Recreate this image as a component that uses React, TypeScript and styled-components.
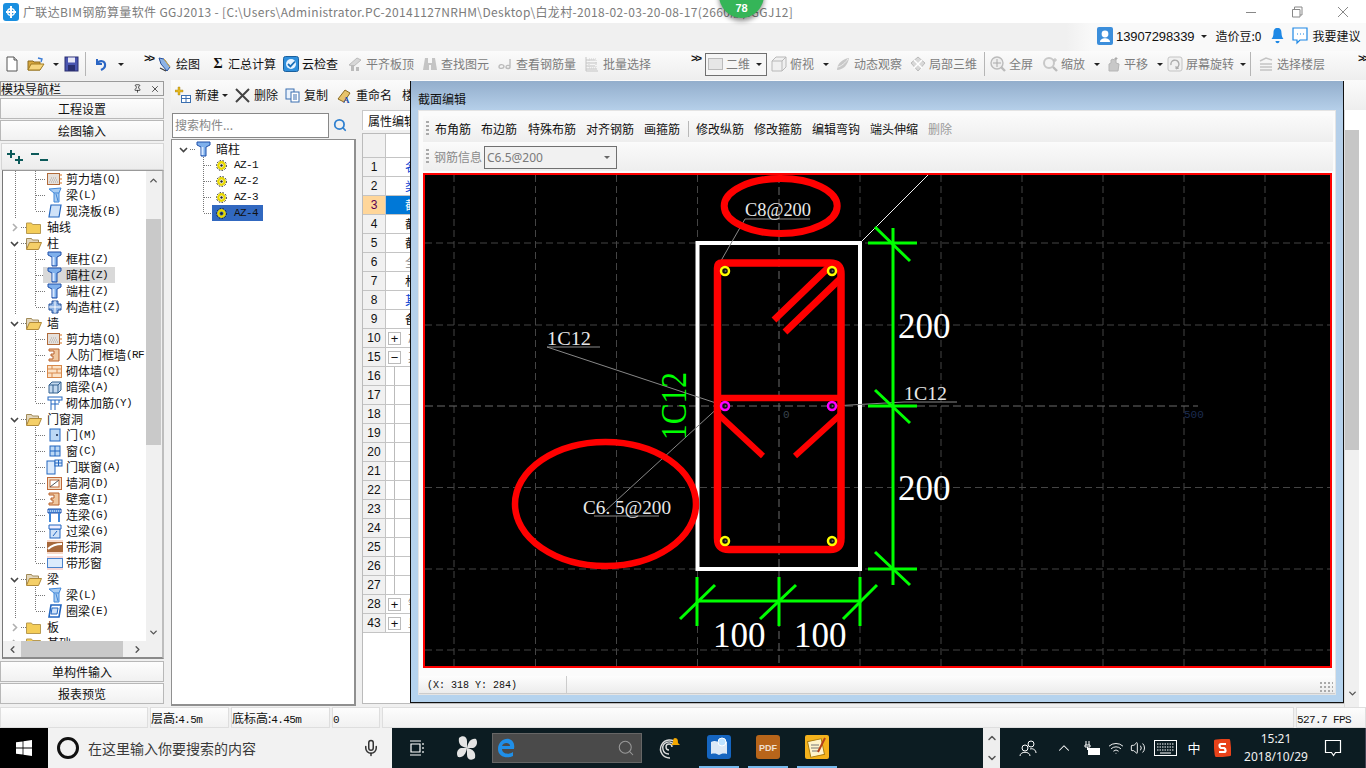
import React from "react";
import styled, { createGlobalStyle } from "styled-components";
import { Mic, Search, Volume2, Wifi, ChevronUp, ChevronDown, ChevronLeft, ChevronRight, X, Pin } from "lucide-react";

const CJK = '"Noto Sans CJK SC", "Liberation Sans", sans-serif';
const MONO = '"Liberation Mono", "Noto Sans CJK SC", monospace';

const GlobalStyle = createGlobalStyle`
  html, body { margin: 0; padding: 0; width: 1366px; height: 768px; overflow: hidden; background: #f0f0f0; }
  * { box-sizing: border-box; }
`;

const Page = styled.div`
  position: relative; width: 1366px; height: 768px; overflow: hidden; display: flex; flex-direction: column;
  font: 12px/16px ${CJK}; color: #111; background: #f0f0f0;
`;

/* ---------- title ---------- */
const TitleBar = styled.div`
  height: 23px; flex: none; background: #fff; display: flex; align-items: center; padding-left: 3px;
  color: #7c7c7c; font-size: 12px; white-space: nowrap;
`;
const TitleText = styled.span`margin-left: 4px; letter-spacing: 0.35px;`;
const WinButtons = styled.div`margin-left: auto; display: flex; height: 23px; align-items: center;`;
const WinBtn = styled.div`width: 46px; display: flex; justify-content: center; align-items: center;`;
const Badge = styled.div`
  position: absolute; left: 719px; top: -28px; width: 45px; height: 46px; border-radius: 50%;
  background: #35b558; box-shadow: 0 3px 5px rgba(0,0,0,.45); color: #fff; font: bold 11px/14px "Liberation Sans", sans-serif;
  display: flex; align-items: flex-end; justify-content: center; padding-bottom: 3px;
`;

const UserBar = styled.div`height: 28px; flex: none; display: flex; align-items: center; justify-content: flex-end; background: #f0f0f0;`;
const UserPlate = styled.div`
  width: 274px; height: 28px; display: flex; align-items: center; background: #f9f9f9; padding: 0 0 2px 5px;
  font-size: 12px; color: #111; white-space: nowrap;
`;
const UserGhost = styled.div`width: 26px; height: 28px; background: linear-gradient(90deg,#f0f0f0,#f9f9f9);`;
const UserNum = styled.span`margin-left: 3px; font: 13px "Liberation Sans", sans-serif; letter-spacing: -0.1px;`;
const UserGap = styled.span<{ $w: number }>`width: ${p => p.$w}px; flex: none;`;

/* ---------- toolbar ---------- */
const ToolBar = styled.div`
  height: 29px; flex: none; display: flex; align-items: center; white-space: nowrap; overflow: hidden;
  background: linear-gradient(#fbfbfb, #eeeeee); padding: 0 0 3px 6px;
`;
const Tool = styled.div<{ $w: number; $off?: boolean }>`
  width: ${p => p.$w}px; flex: none; display: flex; align-items: center; gap: 3px; height: 22px;
  color: ${p => (p.$off ? "#7d7d7d" : "#111")};
`;
const Caret = styled.i<{ $ml?: number; $c?: string }>`
  display: inline-block; width: 0; height: 0; border: 3px solid transparent; border-top: 3px solid ${p => p.$c ?? "#222"}; border-bottom: 0;
  margin-left: ${p => p.$ml ?? 6}px;
`;
const Sep = styled.div<{ $w: number }>`
  width: ${p => p.$w}px; flex: none; height: 24px; position: relative;
  &::before { content: ""; display: block; width: 1px; height: 24px; background: #b5b5b5; }
`;
const More = styled.span<{ $w: number }>`
  width: ${p => p.$w}px; flex: none; align-self: flex-start; font: bold 11px/16px "Liberation Mono", monospace; letter-spacing: -2px; color: #111;
`;
const ViewCombo = styled.div`
  width: 62px; height: 23px; flex: none; margin-right: 4px; border: 1px solid #707070; background: #f6f6f6; display: flex; align-items: center;
  padding-left: 2px; color: #7d7d7d; gap: 3px;
`;
const ViewSwatch = styled.span`width: 15px; height: 12px; border: 1px solid #bbb; background: #e6e6e6;`;
const Sigma = styled.span`width: 14px; font: bold 14px "Liberation Serif", serif; text-align: center;`;

/* ---------- workspace ---------- */
const Workspace = styled.div`flex: 1; min-height: 0; display: flex;`;

const Nav = styled.div`width: 165px; flex: none; display: flex; flex-direction: column; padding-top: 1px; background: #f0f0f0;`;
const NavHead = styled.div`
  height: 15px; flex: none; border: 1px solid #9a9a9a; background: #f0f0f0; display: flex; align-items: center; font-size: 12px; line-height: 13px; margin-bottom: 2px; margin-right: 1px;
`;
const NavHeadIcons = styled.span`margin-left: auto; display: flex; gap: 8px; padding-right: 3px; align-items: center;`;
const NavBtn = styled.div`
  height: 21px; flex: none; margin: 0 1px 1px 0; border: 1px solid #b8b8b8; background: linear-gradient(#fdfdfd,#f1f1f1);
  text-align: center; line-height: 19px; color: #111;
`;
const TreeTools = styled.div`
  height: 27px; flex: none; margin: 1px 1px 0 1px; background: linear-gradient(#f9f9f9,#ececec); border: 1px solid #d6d6d6; display: flex; align-items: center; gap: 7px; padding-left: 5px;
`;
const TreeFrame = styled.div`
  height: 489px; flex: none; margin-right: 1px; margin-left: 2px; border-left: 1px solid #777; border-bottom: 2px solid #8a8a8a; border-right: 2px solid #bdbdbd; border-top: 1px solid #999; background: #f0f0f0;
  display: grid; grid-template-columns: 143px 15px; grid-template-rows: 470px 16px; 
`;
const TreeList = styled.div`background: #fff; overflow: hidden;`;

const dots = (x: number, h: string) =>
  `repeating-linear-gradient(#777 0 1px, transparent 1px 2px) ${x}px 0 / 1px ${h} no-repeat`;
const hdots = (x: number, w: number) =>
  `repeating-linear-gradient(90deg,#777 0 1px, transparent 1px 2px) ${x}px 8px / ${w}px 1px no-repeat`;

const FolderRow = styled.div`
  height: 16px; display: flex; align-items: center; padding-left: 6px; white-space: nowrap; background: ${hdots(18, 6)};
`;
const ChildRow = styled.div<{ $last?: boolean }>`
  height: 16px; display: flex; align-items: center; padding-left: 40px; white-space: nowrap;
  background: ${p => `${dots(12, "100%")}, ${dots(32, p.$last ? "8px" : "100%")}, ${hdots(33, 9)}`};
`;
const ChevronSlot = styled.span`width: 11px; flex: none; display: flex; justify-content: center;`;
const FolderSlot = styled.span`width: 16px; margin-left: 6px; margin-right: 5px; flex: none; display: flex;`;
const ChildLabel = styled.span<{ $hot?: boolean }>`
  display: flex; align-items: center; height: 16px; padding-left: 3px; padding-right: 7px; background: ${p => (p.$hot ? "#d9d9d9" : "transparent")};
`;
const ChildIcon = styled.span`width: 17px; margin-right: 3px; display: flex; justify-content: center;`;
const Code = styled.span`font: 11px/16px ${MONO}; letter-spacing: -0.6px;`;

const VScroll = styled.div`display: flex; flex-direction: column; align-items: center; background: #f0f0f0;`;
const ScrollEnd = styled.div`height: 18px; flex: none; display: flex; align-items: center; justify-content: center; width: 100%;`;
const VThumbGap = styled.div<{ $h: number }>`height: ${p => p.$h}px; flex: none;`;
const VThumb = styled.div<{ $h: number }>`height: ${p => p.$h}px; width: 100%; flex: none; background: #c9c9c9;`;
const HScroll = styled.div`display: flex; align-items: center; background: #f0f0f0;`;
const HEnd = styled.div<{ $ml?: number }>`width: 18px; flex: none; display: flex; justify-content: center; margin-left: ${p => p.$ml ?? 0}px;`;
const HThumb = styled.div`width: 102px; height: 16px; flex: none; background: #c9c9c9;`;
const NavBottom = styled.div`margin-top: 2px; display: flex; flex-direction: column;`;

/* ---------- middle ---------- */
const MidWrap = styled.div`
  flex: 1; margin-left: 6px; display: grid; grid-template-columns: 185px 1fr; grid-template-rows: 30px 1fr; min-width: 0;
`;
const CompTools = styled.div`
  grid-column: 1 / 3; display: flex; align-items: center; padding: 0 0 0 4px; background: linear-gradient(#fbfbfb,#eeeeee); height: 30px; white-space: nowrap;
`;
const CompTool = styled.div<{ $w: number }>`width: ${p => p.$w}px; flex: none; display: flex; align-items: center; gap: 4px; overflow: hidden;`;
const CompCol = styled.div`display: flex; flex-direction: column;`;
const SearchRow = styled.div`height: 29px; flex: none; display: flex; align-items: flex-start; padding-top: 3px;`;
const SearchBox = styled.div`width: 157px; height: 25px; margin-left: 1px; background: #fff; border: 1px solid #888; color: #888; line-height: 22px; padding-left: 2px;`;
const SearchBtn = styled.div`flex: 1; display: flex; justify-content: center; padding: 5px 5px 0 0; color: #2f80d0;`;
const CompTree = styled.div`
  flex: 1; background: #fff; border: 1px solid #909090; border-bottom-width: 2px; border-right-width: 2px; padding-top: 1px; margin-bottom: 1px;
`;
const CompHead = styled.div`
  height: 16px; display: flex; align-items: center; padding-left: 6px; background: ${hdots(18, 6)};
`;
const CompHeadIcon = styled.span`margin-left: 7px; margin-right: 5px; display: flex;`;
const CompRow = styled.div<{ $last?: boolean }>`
  height: 16px; display: flex; align-items: center; padding-left: 40px;
  background: ${p => `${dots(31, p.$last ? "8px" : "100%")}, ${hdots(32, 8)}`};
`;
const CompItem = styled.span<{ $sel?: boolean }>`
  width: 51px; display: flex; align-items: center; gap: 7px; height: 16px; padding-left: 4px; font: 11px/16px ${MONO}; letter-spacing: -0.6px;
  background: ${p => (p.$sel ? "#3168c0" : "transparent")};
`;

/* ---------- property grid ---------- */
const PropCol = styled.div`display: flex; min-width: 0; margin-left: 6px;`;
const PropMain = styled.div`flex: 1; display: flex; flex-direction: column; min-width: 0;`;
const PropTab = styled.div`height: 20px; flex: none; border: 1px solid #c8c8c8; border-bottom: 0; background: #fff; width: 60px; padding-left: 5px; line-height: 20px;`;
const PropGrid = styled.div`flex: 1; margin-top: 3px; margin-bottom: 3px; background: #fff; border: 1px solid #bbb;`;
const GridHead = styled.div`height: 24px; display: flex; border-bottom: 1px solid #c4c4c4;`;
const GridRow = styled.div`height: 19px; display: flex; border-bottom: 1px solid #c4c4c4;`;
const RowNum = styled.div<{ $cur?: boolean }>`
  width: 23px; flex: none; background: ${p => (p.$cur ? "#ffd699" : "#f1f1f1")}; border-right: 1px solid #c4c4c4; text-align: center;
  font: 12px/18px "Liberation Sans", sans-serif; color: ${p => (p.$cur ? "#5a0050" : "#111")};
`;
const RowCell = styled.div<{ $c?: string; $bg?: string }>`
  flex: 1; padding-left: 19px; color: ${p => p.$c ?? "#111"}; background: ${p => p.$bg ?? "#fff"}; line-height: 18px; white-space: nowrap; overflow: hidden;
`;
const PlusCell = styled.div`flex: 1; display: flex; align-items: center; padding-left: 2px; gap: 7px; color: #888; line-height: 18px; white-space: nowrap; overflow: hidden;`;
const PlusBox = styled.span`
  width: 13px; height: 13px; flex: none; border: 1px solid #bbb; background: #fff; color: #111; font: 13px/11px "Liberation Sans", sans-serif; text-align: center;
`;
const SubCell = styled.div`flex: 1; margin-left: 8px; border-left: 1px solid #bbb;`;
const RightScroll = styled.div`
  width: 22px; flex: none; background: #fff; border-left: 1px solid #ddd; display: flex; flex-direction: column; padding-right: 7px;
`;
const RSTop = styled.div`height: 20px; flex: none;`;
const RSThumb = styled.div`height: 320px; flex: none; background: #c6c6c6;`;
const RSRest = styled.div`flex: 1; background: #f0f0f0; display: flex; align-items: flex-end; justify-content: center; padding-bottom: 8px;`;

/* ---------- dialog ---------- */
const Dialog = styled.div`
  position: absolute; left: 410px; top: 81px; width: 934px; height: 622px; display: flex; flex-direction: column;
  border-left: 1px solid #111; border-right: 1px solid #111; border-bottom: 1px solid #111;
  background: linear-gradient(#93aecc 0, #b5cfe9 29px, #b5d3ee 100%);
`;
const DialogTitle = styled.div`height: 29px; flex: none; padding: 10px 0 0 7px; font-size: 12px; line-height: 16px; color: #111;`;
const DialogBody = styled.div`
  margin: 0 7px 7px 7px; flex: 1; min-height: 0; background: #fbfbfb; border: 1px solid #e4e4e4; padding: 5px 2px 0 4px; display: flex; flex-direction: column;
`;
const DlgRow = styled.div<{ $h: number; $mt?: number }>`
  height: ${p => p.$h}px; margin-top: ${p => p.$mt ?? 0}px; flex: none; display: flex; align-items: center; background: linear-gradient(#fafafa,#eeeeee); padding-left: 3px; white-space: nowrap;
`;
const Grip = styled.span`
  width: 3px; height: 16px; margin-right: 6px; flex: none;
  background: repeating-linear-gradient(#aaa 0 2px, transparent 2px 4px);
`;
const DlgItem = styled.span<{ $w: number; $off?: boolean }>`
  width: ${p => p.$w}px; flex: none; color: ${p => (p.$off ? "#9a9a9a" : "#111")};
`;
const DlgSep = styled.span`width: 1px; height: 16px; background: #b8b8b8; margin: 0 7px 0 0; flex: none;`;
const Select = styled.div`
  width: 133px; height: 23px; margin-left: 2px; border: 1px solid #707070; background: #f1f1f1; display: flex; align-items: center; padding: 0 6px 0 2px;
  color: #7a7a7a; font: 12px "Noto Sans", sans-serif; justify-content: space-between;
`;
const DlgLabel = styled.span`color: #8a8a8a; margin-left: -1px;`;
const CanvasWrap = styled.div`margin-top: 2px; width: 909px; height: 495px; flex: none; border: 2px solid #f00; background: #000;`;
const DlgStatus = styled.div`
  margin-top: 8px; height: 18px; flex: none; display: flex; background: linear-gradient(#fdfdfd,#ececec); border-bottom: 1px solid #ccc; margin-left: -4px; margin-right: -2px;
  font: 10px/19px ${MONO};
`;
const DlgStatusCell = styled.div`width: 148px; padding-left: 8px; border-right: 1px solid #ccc; flex: none;`;
const DlgGripBox = styled.div`margin-left: auto; width: 14px; align-self: flex-end; height: 12px; margin-right: 2px;
  background: radial-gradient(circle, #aaa 1px, transparent 1.2px) 0 0 / 4px 4px;`;

/* ---------- status ---------- */
const StatusBar = styled.div`height: 21px; flex: none; display: flex; gap: 2px; background: #f0f0f0;`;
const StatusCell = styled.div<{ $w?: number }>`
  ${p => (p.$w ? `width:${p.$w}px;flex:none;` : "flex:1;")}
  background: linear-gradient(#fdfdfd,#f1f1f1); border: 1px solid #dedede; padding-left: 0; line-height: 19px; font-size: 12px; white-space: nowrap; overflow: hidden;
`;

/* ---------- taskbar ---------- */
const TaskBar = styled.div`height: 40px; flex: none; display: flex; background: #0c1c22; color: #fff; align-items: stretch;`;
const StartBtn = styled.div`width: 48px; flex: none; background: #000; display: flex; align-items: center; justify-content: center;`;
const TaskSearch = styled.div`
  width: 344px; flex: none; background: #f2f2f2; display: flex; align-items: center; color: #3a3a3a; font-size: 14px; padding-left: 9px;
`;
const Cortana = styled.span`width: 22px; height: 22px; border-radius: 50%; border: 3px solid #111; margin-right: 9px; flex: none;`;
const MicSlot = styled.span`margin-left: auto; margin-right: 12px; display: flex; color: #333;`;
const TaskSlot = styled.div<{ $w: number; $run?: boolean; $ml?: number }>`
  width: ${p => p.$w}px; flex: none; margin-left: ${p => p.$ml ?? 0}px; display: flex; align-items: center; justify-content: center;
  border-bottom: ${p => (p.$run ? "2px solid #76b9ed" : "0")}; color: #fff; font-size: 13px;
`;
const EdgeBox = styled.div`
  width: 150px; height: 30px; flex: none; align-self: center; background: #4a4a4a; border: 1px solid #666; display: flex; align-items: center; justify-content: space-between; padding: 0 6px 0 3px; color: #999;
`;
const TrayScroll = styled.div`width: 17px; flex: none; margin-left: auto; background: #eeeeee; color: #555; display: flex; flex-direction: column; align-items: center; justify-content: space-around;`;
const Clock = styled.div`width: 76px; flex: none; text-align: center; font: 12px/18px "Noto Sans", sans-serif; padding-top: 2px; color: #f2f2f2;`;
const TrayEnd = styled.div`width: 14px; flex: none; border-right: 1px solid #445;`;

/* ---------- icons ---------- */
type P = { w?: number; h?: number };
const Sv = ({ w = 16, h = 16, children, vb }: P & { children: React.ReactNode; vb?: string }) => (
  <svg width={w} height={h} viewBox={vb ?? `0 0 ${w} ${h}`} style={{ flex: "none", display: "block" }}>{children}</svg>
);
const NewDoc = () => <Sv w={12} h={16}><path d="M1 1h7l3 3v11H1z" fill="#fff" stroke="#555"/><path d="M8 1v3h3" fill="#ddd" stroke="#555"/></Sv>;
const OpenF = () => <Sv w={18} h={16}><path d="M1 5h5l1 1h6v8H1z" fill="#d8a83e" stroke="#8a6a20"/><path d="M1 14l3-6h13l-4 6z" fill="#f6d67e" stroke="#a07a20"/><path d="M11 2l4 1-1 3" fill="none" stroke="#3a7bd5" strokeWidth="1.4"/></Sv>;
const Save = () => <Sv w={15} h={16}><rect x="1" y="1" width="13" height="14" fill="#4a55b0" stroke="#2a2f70"/><rect x="4" y="1.5" width="7" height="5" fill="#e8e8f6"/><rect x="4" y="9" width="7" height="6" fill="#2a2f70"/></Sv>;
const Undo = () => <Sv w={13} h={16}><path d="M3 3v5h5" fill="none" stroke="#2b66c4" strokeWidth="2"/><path d="M3 8c2-4 9-4 8 2 0 2-2 3-4 4" fill="none" stroke="#2b66c4" strokeWidth="2.2"/></Sv>;
const Draw = () => <Sv><path d="M2 2l5 1 6 8-3 4-6-7z" fill="#8db3e6" stroke="#28509c"/><path d="M7 3l6 8" stroke="#e0b040"/><path d="M3 12l6 3" stroke="#333" strokeWidth="1.2"/></Sv>;
const Cloud = () => <Sv><rect x="0.5" y="0.5" width="15" height="15" rx="2" fill="#2f8fdc" stroke="#1a5f9c"/><circle cx="8" cy="8" r="5" fill="#e8f4ff"/><path d="M5 8l2.4 2.4L12 5.5" fill="none" stroke="#1a6fb8" strokeWidth="1.8"/></Sv>;
const GFlat = () => <Sv><path d="M2 9l8-7 4 2-7 6z" fill="#d8d8d8" stroke="#bbb"/><path d="M4 15V9h3v6zM9 15v-4h3v4z" fill="#bbb"/></Sv>;
const GBino = () => <Sv><path d="M3 2h3v5h4V2h3l2 12H9V9H7v5H1z" fill="#c4c4c4"/></Sv>;
const GLink = () => <Sv><path d="M2 11c0-3 4-3 5-1 0 3-5 3-5 1z" fill="none" stroke="#bbb" strokeWidth="1.4"/><path d="M13 3v8c0 2-4 2-4 0s3-2 4-1" fill="none" stroke="#bbb" strokeWidth="1.4"/></Sv>;
const GBatch = () => <Sv><path d="M2 1v14h12M2 4h9M2 7h11M2 10h9M2 13h11" fill="none" stroke="#c4c4c4"/><rect x="5" y="3" width="7" height="9" fill="none" stroke="#d0d0d0" strokeDasharray="1 1"/></Sv>;
const GCube = () => <Sv><path d="M1 5l4-4h10v10l-4 4H1z" fill="#f0f0f0" stroke="#b8b8b8"/><path d="M1 5h10v10M11 5l4-4" fill="none" stroke="#b8b8b8"/></Sv>;
const GOrbit = () => <Sv><path d="M2 14c0-6 5-11 12-12-1 7-6 12-12 12z" fill="#c8c8c8"/><path d="M2 11c4 0 9-5 11-8" stroke="#eee" fill="none"/></Sv>;
const GLocal = () => <Sv><path d="M8 1l7 6-7 8-7-8z" fill="#d8d8d8" stroke="#bbb"/><path d="M4 4l8 8M12 4l-8 8" stroke="#fff" strokeWidth="1.5"/></Sv>;
const GZoomAll = () => <Sv><circle cx="7" cy="7" r="6" fill="#eee" stroke="#bbb" strokeWidth="1.4"/><path d="M7 3v8M3 7h8" stroke="#aaa"/><path d="M11 11l4 4" stroke="#bbb" strokeWidth="2.4"/></Sv>;
const GZoom = () => <Sv><circle cx="7" cy="7" r="5" fill="#f4f4f4" stroke="#c8c8c8" strokeWidth="2"/><path d="M11 11l4 4" stroke="#bbb" strokeWidth="2.4"/><path d="M13 2v4M11 4h4" stroke="#bbb"/></Sv>;
const GPan = () => <Sv><path d="M4 15V8l2-1V4l2-1 1 1 2-1v4l3 1-1 7z" fill="#c8c8c8" stroke="#b5b5b5"/><path d="M11 1v3M9.5 2.5h3" stroke="#aaa"/></Sv>;
const GRotate = () => <Sv><rect x="1" y="1" width="14" height="14" rx="2" fill="#f0f0f0" stroke="#c4c4c4"/><path d="M4 9a4 4 0 1 1 5 3" fill="none" stroke="#aaa" strokeWidth="1.4"/><path d="M9 10v3l3-1" fill="none" stroke="#aaa"/></Sv>;
const GLayer = () => <Sv><path d="M2 5l6-3 6 2M2 8h12M2 11h12M2 14h12" fill="none" stroke="#c4c4c4" strokeWidth="1.4"/></Sv>;
const UserIc = () => <Sv w={16} h={18}><rect width="16" height="18" rx="2" fill="#3b8edb"/><circle cx="8" cy="7" r="3.4" fill="#fff"/><path d="M3 15c0-5 10-5 10 0z" fill="#fff"/></Sv>;
const Bell = () => <Sv w={13} h={18}><path d="M6.5 1c-3 0-4 2-4 5 0 3-1 5-2 6h12c-1-1-2-3-2-6 0-3-1-5-4-5z" fill="#1e88e5"/><path d="M4.5 14c0 3 4 3 4 0z" fill="#1e88e5"/></Sv>;
const Msg = () => <Sv w={16} h={18}><path d="M1 1h14v12H8l-3 3v-3H1z" fill="#fff" stroke="#1e88e5" strokeWidth="1.2"/><path d="M5 7h1M8 7h1M11 7h1" stroke="#1e88e5"/></Sv>;
const AppLogo = () => <Sv w={16} h={18}><rect width="16" height="18" rx="3" fill="#1a8fe0"/><path d="M8 3v12M3 9h10" stroke="#fff" strokeWidth="2"/><circle cx="8" cy="9" r="3.4" fill="none" stroke="#fff" strokeWidth="1.4"/></Sv>;
const MinIc = () => <Sv w={12} h={12}><path d="M1 6.5h10" stroke="#888"/></Sv>;
const MaxIc = () => <Sv w={12} h={12}><path d="M3.500 3V1H11v8H9M1.500 3.500H9v7.500H1.500z" fill="none" stroke="#888"/></Sv>;
const CloseIc = () => <Sv w={12} h={12}><path d="M1 1l10 10M11 1L1 11" stroke="#888"/></Sv>;

const Col = () => <Sv w={15} h={16}><path d="M1 1h13v3l-4 2v9H5V6L1 4z" fill="#7fb0ec" stroke="#1f4fa8"/><path d="M6.500 6v8" stroke="#d8e8ff" strokeWidth="2"/></Sv>;
const Wall = () => <Sv w={15} h={14}><rect x="0.5" y="1.500" width="12" height="11" fill="#e6e0da" stroke="#b06a3a"/><path d="M2 10h9M3 8h7M4 6h6" stroke="#aaa" strokeDasharray="1 1"/><path d="M14 2v10" stroke="#d8731c" strokeDasharray="2 2"/></Sv>;
const Beam = () => <Sv w={14} h={16}><path d="M1 2l12-1-2 5v9H6V6z" fill="#a9cdf2" stroke="#3f86d8"/><path d="M6 6h5M8 7l2 7" stroke="#3f86d8"/></Sv>;
const Slab = () => <Sv w={14} h={14}><path d="M3 1h10l-2 12H1z" fill="#cfe2f8" stroke="#2266c0" strokeWidth="1.2"/></Sv>;
const Struct = () => <Sv w={14} h={14}><path d="M4 1h6v3h3v6h-3v3H4v-3H1V4h3z" fill="#8fb4e4" stroke="#23509c"/><path d="M7 1v12M1 7h12" stroke="#fff"/></Sv>;
const Door = () => <Sv w={12} h={14}><rect x="1" y="1" width="10" height="12" fill="#bcd8f5" stroke="#2266c0"/><circle cx="8" cy="7" r="1" fill="#124"/></Sv>;
const Win = () => <Sv w={12} h={12}><rect x="1" y="1" width="10" height="10" fill="#bcd8f5" stroke="#2266c0"/><path d="M6 1v10M1 6h10" stroke="#2266c0"/></Sv>;
const DoorWin = () => <Sv w={17} h={16}><rect x="1" y="2" width="8" height="13" fill="#dbeafc" stroke="#2266c0"/><rect x="9" y="1" width="7" height="6" fill="#dbeafc" stroke="#2266c0"/><path d="M12.500 1v6M9 4h7" stroke="#2266c0"/></Sv>;
const Hole = () => <Sv w={15} h={13}><rect x="0.5" y="0.5" width="14" height="12" fill="#f3dfc8" stroke="#c06a3a"/><rect x="3" y="3" width="9" height="7" fill="#fff" stroke="#c06a3a"/><path d="M3 10l9-7" stroke="#555"/></Sv>;
const Niche = () => <Sv w={14} h={14}><path d="M1 1h10v12H1v-2h4V8H3V6h3V3H1z" fill="#f0c8a0" stroke="#b8602a"/></Sv>;
const Lintel = () => <Sv w={15} h={15}><path d="M1 1h13v4H1z" fill="#5b97e0" stroke="#1f4fa8"/><path d="M3 5v9M12 5v9" stroke="#3f86d8" strokeWidth="2"/><path d="M1 3h13" stroke="#fff" strokeDasharray="1 1"/></Sv>;
const Lin2 = () => <Sv w={14} h={15}><rect x="2" y="5" width="10" height="9" fill="#cfe2f8" stroke="#2266c0"/><path d="M1 1h12v4H1z" fill="#eef" stroke="#2266c0"/><path d="M5 12l4-5" stroke="#2266c0"/></Sv>;
const BandH = () => <Sv w={16} h={14}><rect y="0" width="16" height="14" fill="#f8d8c8"/><rect y="2" width="16" height="10" fill="#a8683a"/><path d="M1 9c4-4 8-5 14-5" stroke="#fff" strokeWidth="2" fill="none"/></Sv>;
const BandW = () => <Sv w={16} h={14}><rect width="16" height="14" fill="#f8d8d8"/><rect x="0.5" y="2.500" width="15" height="9" fill="#dbeafc" stroke="#4a82cc"/></Sv>;
const Brick = () => <Sv w={15} h={13}><rect x="0.5" y="0.5" width="14" height="12" fill="#fbe3c8" stroke="#d8884a"/><path d="M0 4h15M0 8h15M5 0v4M10 4v4M5 8v5" stroke="#d8884a"/></Sv>;
const HiddenBeam = () => <Sv w={14} h={14}><path d="M1 5l3-3h9v8l-3 3H1z" fill="#c4d9f0" stroke="#33608f"/><path d="M1 5h9v8M10 5l3-3M5 5v8" fill="none" stroke="#33608f"/></Sv>;
const Rein = () => <Sv w={16} h={16}><rect x="1" y="2" width="14" height="3" fill="#fff" stroke="#2266c0"/><path d="M4 5v10M8 5v10M12 5v3M4 9h8" stroke="#2266c0" fill="none"/></Sv>;
const RingB = () => <Sv w={14} h={14}><path d="M3 1h10l-2 12H1z" fill="#fff" stroke="#2266c0" strokeWidth="1.6"/><path d="M4 4h6l-1 6H3z" fill="#cfe2f8" stroke="#2266c0"/></Sv>;
const FolderC = () => <Sv w={15} h={13}><path d="M0.5 2h5l1 1.500h8v9h-14z" fill="#f4cd58" stroke="#b89a50"/></Sv>;
const FolderO = () => <Sv w={16} h={13}><path d="M0.5 1.500h5l1 1.500h6v3h-8l-4 6z" fill="#e2d6bc" stroke="#a08a58"/><path d="M0.5 12.500l3-7h12l-3 7z" fill="#f4cf68" stroke="#b08a3a"/></Sv>;
const Gear = () => <Sv w={11} h={11}><circle cx="5.500" cy="5.500" r="3.200" fill="none" stroke="#e8d800" strokeWidth="2.400"/><circle cx="5.500" cy="5.500" r="5" fill="none" stroke="#222" strokeWidth="1" strokeDasharray="1.500 1.500"/><circle cx="5.500" cy="5.500" r="1.200" fill="#222"/></Sv>;
const PlusPlus = () => <Sv w={17} h={14}><path d="M4 0v8M0 4h8M12 6v8M8 10h8" stroke="#0c5a5a" strokeWidth="2"/></Sv>;
const MinusMinus = () => <Sv w={17} h={14}><path d="M0 4h8M9 10h8" stroke="#0c5a5a" strokeWidth="2"/></Sv>;
const TChev = ({ open, gray }: { open?: boolean; gray?: boolean }) => (
  <Sv w={9} h={9}><path d={open ? "M1 3l3.500 3.500L8 3" : "M3 1l3.500 3.500L3 8"} fill="none" stroke={gray ? "#b0b0b0" : "#444"} strokeWidth="1.600"/></Sv>
);
const CNew = () => <Sv w={16} h={18}><path d="M3 1h2v3h3v2H5v3H3V6H0V4h3z" fill="#e5b81e" stroke="#a07a10" strokeWidth=".4"/><rect x="6.500" y="9.500" width="9" height="7" fill="#fff" stroke="#3a6fb0"/><path d="M6.500 12.500h9M11 9.500v7" stroke="#3a6fb0"/></Sv>;
const CDel = () => <Sv w={15} h={15}><path d="M1 1l13 13M14 1L1 14" stroke="#444" strokeWidth="2"/></Sv>;
const CCopy = () => <Sv w={15} h={15}><rect x="1" y="1" width="8" height="10" fill="#eaf2fc" stroke="#3a6fb0"/><rect x="6" y="4" width="8" height="10" fill="#fff" stroke="#3a6fb0"/><path d="M8 7h4M8 9h4M8 11h4" stroke="#3a6fb0"/></Sv>;
const CRen = () => <Sv w={16} h={17}><path d="M2 12l7-9 5 3-6 9z" fill="#e7c36a" stroke="#8a6a20"/><text x="7" y="16" fontSize="9" fontWeight="bold" fill="#1f4fa8" fontFamily="Liberation Serif">A</text></Sv>;

/* ---------- tree data ---------- */
type N = { t: string; c?: string; i?: React.ReactNode; last?: boolean; hot?: boolean };
const RowChild = ({ t, c, i, last, hot }: N) => (
  <ChildRow $last={last}>
    <ChildLabel $hot={hot}>
      <ChildIcon>{i}</ChildIcon>
      {t}{c && <Code>{c}</Code>}
    </ChildLabel>
  </ChildRow>
);
const RowFolder = ({ t, open }: { t: string; open?: boolean }) => (
  <FolderRow>
    <ChevronSlot><TChev open={open} gray={!open} /></ChevronSlot>
    <FolderSlot>{open ? <FolderO /> : <FolderC />}</FolderSlot>
    {t}
  </FolderRow>
);

const rowNums = [1,2,3,4,5,6,7,8,9];
const cellText: [string, string?][] = [["名","#0a3fd0"],["类","#0a3fd0"],["截","#fff"],["截"],["截"],["全","#888"],["材"],["其","#0a3fd0"],["备"]];

const Canvas = () => {
  const vx = [454, 535.5, 616.5, 697.5, 860, 941, 1022, 1103, 1184, 1265];
  const hy = [243, 325, 487.5, 569, 650];
  const label = { fontFamily: '"Liberation Serif", serif', fill: "#e8e8e8" };
  const big = { fontFamily: '"Liberation Serif", serif', fill: "#fff", fontSize: 35 };
  const dotPts = [[725,271,"#ff0"],[832,271,"#ff0"],[725,541,"#ff0"],[832,541,"#ff0"],[725,406,"#f0f"],[832,406,"#f0f"]] as const;
  return (
    <svg width={905} height={491} viewBox="425 175 905 491" style={{ display: "block" }}>
      <g stroke="#444" strokeWidth="1" strokeDasharray="7 4" fill="none">
        {vx.map(x => <path key={x} d={`M${x} 175V666`} />)}
        {hy.map(y => <path key={y} d={`M425 ${y}H1330`} />)}
      </g>
      <g stroke="#6a6a6a" strokeWidth="1" strokeDasharray="8 4" fill="none">
        <path d="M779 175V666" /><path d="M425 406H1198" />
      </g>
      <rect x="697.5" y="243" width="162.5" height="326" fill="none" stroke="#fff" strokeWidth="4" />
      <path d="M860 243L930 173" stroke="#eee" strokeWidth="1" />
      <g stroke="#888" strokeWidth="1" fill="none">
        <path d="M745 219H810M745 219L718 266" />
        <path d="M547 347H600M547 347L722 405" />
        <path d="M904 402H957M904 402L832 406" />
        <path d="M594 516H659M604 512L722 404" />
      </g>
      <g fill="none" stroke="#f00">
        <path d="M717.5 268V538Q717.5 549.5 729 549.5H830Q841 549.5 841 538V274Q841 263 830 263H722Q717.5 263 717.5 268Z" strokeWidth="7.5" />
        <path d="M717.5 398H841" strokeWidth="6.5" />
        <path d="M830 266L774 320M840 279L785 332" strokeWidth="7" />
        <path d="M719 415L763 456M840 415L795 456" strokeWidth="6" />
        <ellipse cx="780.7" cy="206" rx="56.5" ry="27.5" strokeWidth="7" />
        <ellipse cx="605.5" cy="504" rx="90.5" ry="62" strokeWidth="6.5" />
      </g>
      <g stroke="#0f0" strokeWidth="3" fill="none">
        <path d="M893 228V585M868 243H917M868 406H917M868 569H917" />
        <path d="M875 227L910 261M875 390L910 423M875 552L910 585" />
        <path d="M697 601H860M697 577V626M779 577V626M860 577V626" />
        <path d="M680 619L715 585M760 619L796 585M843 619L877 585" />
      </g>
      {dotPts.map(([x, y, c], k) => (
        <g key={k}>
          <circle cx={x} cy={y} r="4" fill="#111" stroke={c} strokeWidth="2.5" />
          <circle cx={x + 0.5} cy={y} r="1" fill="#666" />
        </g>
      ))}
      <text x="745" y="216" fontSize="19" textLength="66" lengthAdjust="spacingAndGlyphs" {...label}>C8@200</text>
      <text x="583" y="514" fontSize="19" textLength="88" lengthAdjust="spacingAndGlyphs" {...label}>C6. 5@200</text>
      <text x="547" y="345" fontSize="19" textLength="44" lengthAdjust="spacingAndGlyphs" {...label}>1C12</text>
      <text x="904" y="400" fontSize="19" textLength="43" lengthAdjust="spacingAndGlyphs" {...label}>1C12</text>
      <text x="898" y="337.5" {...big}>200</text>
      <text x="898" y="499.5" {...big}>200</text>
      <text x="713" y="646.5" {...big}>100</text>
      <text x="794" y="646.5" {...big}>100</text>
      <text transform="translate(686,440) rotate(-90)" fontFamily='"Liberation Serif", serif' fontSize="35" fill="#0f0" textLength="68" lengthAdjust="spacingAndGlyphs">1C12</text>
      <text x="783" y="418" fontSize="11" fontFamily='"Liberation Mono", monospace' fill="#39434d">0</text>
      <text x="1184" y="418" fontSize="11" fontFamily='"Liberation Mono", monospace' fill="#1c2c50">500</text>
    </svg>
  );
};

export default function App() {
  return (
    <>
      <GlobalStyle />
      <Page>
        <TitleBar>
          <AppLogo />
          <TitleText>广联达BIM钢筋算量软件 GGJ2013 - [C:\Users\Administrator.PC-20141127NRHM\Desktop\白龙村-2018-02-03-20-08-17(2660版).GGJ12]</TitleText>
          <WinButtons>
            <WinBtn><MinIc /></WinBtn><WinBtn><MaxIc /></WinBtn><WinBtn><CloseIc /></WinBtn>
          </WinButtons>
        </TitleBar>
        <Badge>78</Badge>

        <UserBar>
          <UserGhost />
          <UserPlate>
            <UserIc />
            <UserNum>13907298339</UserNum>
            <Caret $ml={7} />
            <UserGap $w={8} />造价豆:0
            <UserGap $w={10} /><Bell />
            <UserGap $w={8} /><Msg />
            <UserGap $w={4} />我要建议
          </UserPlate>
        </UserBar>

        <ToolBar>
          <Tool $w={21}><NewDoc /></Tool>
          <Tool $w={37}><OpenF /><Caret $ml={5} /></Tool>
          <Tool $w={21}><Save /></Tool>
          <Sep $w={9} />
          <Tool $w={50}><Undo /><Caret $ml={8} /></Tool>
          <More $w={13}>&gt;&gt;</More>
          <Tool $w={54}><Draw />绘图</Tool>
          <Tool $w={72}><Sigma>Σ</Sigma>汇总计算</Tool>
          <Tool $w={64}><Cloud />云检查</Tool>
          <Tool $w={75} $off><GFlat />平齐板顶</Tool>
          <Tool $w={75} $off><GBino />查找图元</Tool>
          <Tool $w={87} $off><GLink />查看钢筋量</Tool>
          <Tool $w={107} $off><GBatch />批量选择</Tool>
          <More $w={14}>&gt;&gt;</More>
          <ViewCombo><ViewSwatch />二维<Caret $ml={3} /></ViewCombo>
          <Tool $w={64} $off><GCube />俯视<Caret $ml={6} /></Tool>
          <Tool $w={75} $off><GOrbit />动态观察</Tool>
          <Tool $w={74} $off><GLocal />局部三维</Tool>
          <Sep $w={6} />
          <Tool $w={52} $off><GZoomAll />全屏</Tool>
          <Tool $w={63} $off><GZoom />缩放<Caret $ml={6} /></Tool>
          <Tool $w={62} $off><GPan />平移<Caret $ml={6} /></Tool>
          <Tool $w={83} $off><GRotate />屏幕旋转<Caret $ml={3} /></Tool>
          <Sep $w={8} />
          <Tool $w={100} $off><GLayer />选择楼层</Tool>
          <More $w={8}>&gt;&gt;</More>
        </ToolBar>

        <Workspace>
          <Nav>
            <NavHead>模块导航栏<NavHeadIcons><Pin size={9} color="#222" /><X size={10} color="#333" /></NavHeadIcons></NavHead>
            <NavBtn>工程设置</NavBtn>
            <NavBtn>绘图输入</NavBtn>
            <TreeTools><PlusPlus /><MinusMinus /></TreeTools>
            <TreeFrame>
              <TreeList>
                <RowChild t="剪力墙" c="(Q)" i={<Wall />} />
                <RowChild t="梁" c="(L)" i={<Beam />} />
                <RowChild t="现浇板" c="(B)" i={<Slab />} last />
                <RowFolder t="轴线" />
                <RowFolder t="柱" open />
                <RowChild t="框柱" c="(Z)" i={<Col />} />
                <RowChild t="暗柱" c="(Z)" i={<Col />} hot />
                <RowChild t="端柱" c="(Z)" i={<Col />} />
                <RowChild t="构造柱" c="(Z)" i={<Struct />} last />
                <RowFolder t="墙" open />
                <RowChild t="剪力墙" c="(Q)" i={<Wall />} />
                <RowChild t="人防门框墙" c="(RF" i={<Niche />} />
                <RowChild t="砌体墙" c="(Q)" i={<Brick />} />
                <RowChild t="暗梁" c="(A)" i={<HiddenBeam />} />
                <RowChild t="砌体加筋" c="(Y)" i={<Rein />} last />
                <RowFolder t="门窗洞" open />
                <RowChild t="门" c="(M)" i={<Door />} />
                <RowChild t="窗" c="(C)" i={<Win />} />
                <RowChild t="门联窗" c="(A)" i={<DoorWin />} />
                <RowChild t="墙洞" c="(D)" i={<Hole />} />
                <RowChild t="壁龛" c="(I)" i={<Niche />} />
                <RowChild t="连梁" c="(G)" i={<Lintel />} />
                <RowChild t="过梁" c="(G)" i={<Lin2 />} />
                <RowChild t="带形洞" i={<BandH />} />
                <RowChild t="带形窗" i={<BandW />} last />
                <RowFolder t="梁" open />
                <RowChild t="梁" c="(L)" i={<Beam />} />
                <RowChild t="圈梁" c="(E)" i={<RingB />} last />
                <RowFolder t="板" />
                <RowFolder t="基础" />
              </TreeList>
              <VScroll>
                <ScrollEnd><ChevronUp size={11} strokeWidth={3} color="#555" /></ScrollEnd>
                <VThumbGap $h={30} />
                <VThumb $h={226} />
                <VThumbGap $h={178} />
                <ScrollEnd><ChevronDown size={11} strokeWidth={3} color="#555" /></ScrollEnd>
              </VScroll>
              <HScroll>
                <HEnd><ChevronLeft size={11} strokeWidth={3} color="#555" /></HEnd>
                <HThumb />
                <HEnd $ml={5}><ChevronRight size={11} strokeWidth={3} color="#555" /></HEnd>
              </HScroll>
              <div />
            </TreeFrame>
            <NavBottom>
              <NavBtn>单构件输入</NavBtn>
              <NavBtn>报表预览</NavBtn>
            </NavBottom>
          </Nav>

          <MidWrap>
            <CompTools>
              <CompTool $w={60}><CNew />新建<Caret $ml={-1} /></CompTool>
              <CompTool $w={50}><CDel />删除</CompTool>
              <CompTool $w={51}><CCopy />复制</CompTool>
              <CompTool $w={66}><CRen />重命名</CompTool>
              <CompTool $w={8}>楼</CompTool>
            </CompTools>
            <CompCol>
              <SearchRow>
                <SearchBox>搜索构件...</SearchBox>
                <SearchBtn><Search size={14} strokeWidth={3} /></SearchBtn>
              </SearchRow>
              <CompTree>
                <CompHead>
                  <ChevronSlot><TChev open /></ChevronSlot>
                  <CompHeadIcon><Col /></CompHeadIcon>暗柱
                </CompHead>
                <CompRow><CompItem><Gear />AZ-1</CompItem></CompRow>
                <CompRow><CompItem><Gear />AZ-2</CompItem></CompRow>
                <CompRow><CompItem><Gear />AZ-3</CompItem></CompRow>
                <CompRow $last><CompItem $sel><Gear />AZ-4</CompItem></CompRow>
              </CompTree>
            </CompCol>
            <PropCol>
              <PropMain>
                <PropTab>属性编辑</PropTab>
                <PropGrid>
                  <GridHead><RowNum /><RowCell /></GridHead>
                  {rowNums.map((n, k) => (
                    <GridRow key={n}>
                      <RowNum $cur={n === 3}>{n}</RowNum>
                      <RowCell $c={cellText[k][1]} $bg={n === 3 ? "#0078d7" : undefined}>{cellText[k][0]}</RowCell>
                    </GridRow>
                  ))}
                  <GridRow><RowNum>10</RowNum><PlusCell><PlusBox>+</PlusBox>芯</PlusCell></GridRow>
                  <GridRow><RowNum>15</RowNum><PlusCell><PlusBox>−</PlusBox>其</PlusCell></GridRow>
                  {[16,17,18,19,20,21,22,23,24,25,26,27].map(n => (
                    <GridRow key={n}><RowNum>{n}</RowNum><SubCell /></GridRow>
                  ))}
                  <GridRow><RowNum>28</RowNum><PlusCell><PlusBox>+</PlusBox>锚</PlusCell></GridRow>
                  <GridRow><RowNum>43</RowNum><PlusCell><PlusBox>+</PlusBox>显</PlusCell></GridRow>
                </PropGrid>
              </PropMain>
              <RightScroll>
                <RSTop />
                <RSThumb />
                <RSRest><ChevronDown size={11} strokeWidth={3} color="#555" /></RSRest>
              </RightScroll>
            </PropCol>
          </MidWrap>
        </Workspace>

        <StatusBar>
          <StatusCell $w={148} />
          <StatusCell $w={79}>层高:<Code>4.5m</Code></StatusCell>
          <StatusCell $w={99}>底标高:<Code>4.45m</Code></StatusCell>
          <StatusCell $w={48}><Code>0</Code></StatusCell>
          <StatusCell />
          <StatusCell $w={70}><Code>527.7 FPS</Code></StatusCell>
        </StatusBar>

        <TaskBar>
          <StartBtn>
            <Sv w={16} h={16}><path d="M0 2.300L6.600 1.400V7.600H0zM7.400 1.300L16 0V7.600H7.400zM0 8.400H6.600V14.600L0 13.700zM7.400 8.400H16V16L7.400 14.700z" fill="#fff" /></Sv>
          </StartBtn>
          <TaskSearch>
            <Cortana />在这里输入你要搜索的内容
            <MicSlot><Mic size={18} /></MicSlot>
          </TaskSearch>
          <TaskSlot $w={50}>
            <Sv w={16} h={16}><path d="M1 1h11M1 15h11M2 4h9v8H2zM14 3v2M14 7v2M14 11v2" fill="none" stroke="#fff" strokeWidth="1.2" /></Sv>
          </TaskSlot>
          <TaskSlot $w={50}>
            <Sv w={22} h={26}><g fill="#e4e4e4"><path d="M11 13C5 12 2 9 3 3c3-3 8-2 8 3z" /><path d="M11 13c1-6 4-10 9-9 2 3 1 8-3 9z" /><path d="M11 13c6 1 9 4 8 10-3 3-8 2-8-3z" /><path d="M11 13c-1 6-4 10-9 9-2-3-1-8 3-9z" /></g></Sv>
          </TaskSlot>
          <EdgeBox>
            <Sv w={20} h={24}><path d="M2 13C2 6 8 2 13 3c4 1 6 5 5 10H6c0 5 7 6 11 3v4c-6 3-15 1-15-7zm4-3h8c0-4-7-4-8 0z" fill="#1f8fe8" /></Sv>
            <Search size={18} strokeWidth={1.4} />
          </EdgeBox>
          <TaskSlot $w={50} $ml={3}>
            <Sv w={24} h={24}><path d="M12 22a9 9 0 1 1 7-14M11 18a6 6 0 1 1 5-9M11 14a3 3 0 1 1 3-3" fill="none" stroke="#ddd" strokeWidth="1.4" /><path d="M17 2c3 0 3 3 3 5l2 2h-9l2-2c0-2 0-5 2-5z" fill="#f5a800" /></Sv>
          </TaskSlot>
          <TaskSlot $w={40} $run $ml={4}>
            <Sv w={24} h={24}><rect width="24" height="24" rx="3" fill="#1565c0" /><path d="M4 7c4-2 6-1 8 1 2-2 4-3 8-1v12c-4-1-6 0-8 1-2-1-4-2-8-1z" fill="#dce9f6" /><circle cx="15" cy="7" r="4" fill="#bfe3ff" stroke="#fff" /></Sv>
          </TaskSlot>
          <TaskSlot $w={40} $run $ml={9}>
            <Sv w={24} h={24}><rect width="24" height="24" rx="3" fill="#b8651a" /><text x="12" y="16" fontSize="9" fontWeight="bold" textAnchor="middle" fill="#f0e0d0" fontFamily="Liberation Sans">PDF</text></Sv>
          </TaskSlot>
          <TaskSlot $w={40} $run $ml={9}>
            <Sv w={24} h={24}><rect width="24" height="24" rx="2" fill="#f5b21c" /><rect x="4" y="5" width="14" height="16" fill="#fff4cc" stroke="#a87a10" transform="rotate(-12 11 13)" /><path d="M6 10h8M6 13h8M7 16h7" stroke="#777" /><path d="M20 3L13 17" stroke="#b5401a" strokeWidth="2" /></Sv>
          </TaskSlot>
          <TrayScroll>
            <ChevronUp size={12} strokeWidth={3} />
            <ChevronDown size={12} strokeWidth={3} />
          </TrayScroll>
          <TaskSlot $w={38} $ml={9}>
            <Sv w={18} h={18}><circle cx="6" cy="9" r="3" fill="none" stroke="#fff" /><path d="M1 17c0-5 10-5 10 0" fill="none" stroke="#fff" /><circle cx="12" cy="5" r="3" fill="none" stroke="#fff" /><path d="M11 10c3-1 6 1 6 4" fill="none" stroke="#fff" /></Sv>
          </TaskSlot>
          <TaskSlot $w={34}><ChevronUp size={18} strokeWidth={1.4} /></TaskSlot>
          <TaskSlot $w={22}>
            <Sv w={18} h={16}><path d="M3 1v4M6 1v4M2 5h5v2H2zM4.500 7v3" stroke="#fff" fill="none" /><rect x="5" y="8" width="12" height="7" fill="#fff" /></Sv>
          </TaskSlot>
          <TaskSlot $w={25}><Wifi size={16} strokeWidth={1.4} /></TaskSlot>
          <TaskSlot $w={20}><Volume2 size={16} strokeWidth={1.4} /></TaskSlot>
          <TaskSlot $w={34}>
            <Sv w={23} h={16}><rect x="0.5" y="0.5" width="22" height="15" fill="none" stroke="#fff" /><path d="M3 4h17M3 7h17M3 10h17" stroke="#fff" strokeDasharray="1.500 1" /><path d="M6 13h11" stroke="#fff" /></Sv>
          </TaskSlot>
          <TaskSlot $w={24}>中</TaskSlot>
          <TaskSlot $w={32}>
            <Sv w={17} h={18}><rect width="17" height="18" rx="3" fill="#e8421a" transform="rotate(-6 8 9)" /><path d="M12 5H7c-2 0-2 3 0 4h3c2 1 2 4 0 4H5" fill="none" stroke="#fff" strokeWidth="2.2" /></Sv>
          </TaskSlot>
          <Clock>15:21<br />2018/10/29</Clock>
          <TaskSlot $w={38}>
            <Sv w={18} h={18}><path d="M1.500 1.500h15v12h-5l-2 3-2-3h-6z" fill="none" stroke="#fff" strokeWidth="1.2" /></Sv>
          </TaskSlot>
          <TrayEnd />
        </TaskBar>

        <Dialog>
          <DialogTitle>截面编辑</DialogTitle>
          <DialogBody>
            <DlgRow $h={26}>
              <Grip />
              <DlgItem $w={46}>布角筋</DlgItem>
              <DlgItem $w={47}>布边筋</DlgItem>
              <DlgItem $w={58}>特殊布筋</DlgItem>
              <DlgItem $w={58}>对齐钢筋</DlgItem>
              <DlgItem $w={44}>画箍筋</DlgItem>
              <DlgSep />
              <DlgItem $w={58}>修改纵筋</DlgItem>
              <DlgItem $w={58}>修改箍筋</DlgItem>
              <DlgItem $w={58}>编辑弯钩</DlgItem>
              <DlgItem $w={58}>端头伸缩</DlgItem>
              <DlgItem $w={30} $off>删除</DlgItem>
            </DlgRow>
            <DlgRow $h={28} $mt={1}>
              <Grip />
              <DlgLabel>钢筋信息</DlgLabel>
              <Select>C6.5@200<Caret $ml={0} $c="#666" /></Select>
            </DlgRow>
            <CanvasWrap><Canvas /></CanvasWrap>
            <DlgStatus>
              <DlgStatusCell>(X: 318 Y: 284)</DlgStatusCell>
              <DlgGripBox />
            </DlgStatus>
          </DialogBody>
        </Dialog>
      </Page>
    </>
  );
}
